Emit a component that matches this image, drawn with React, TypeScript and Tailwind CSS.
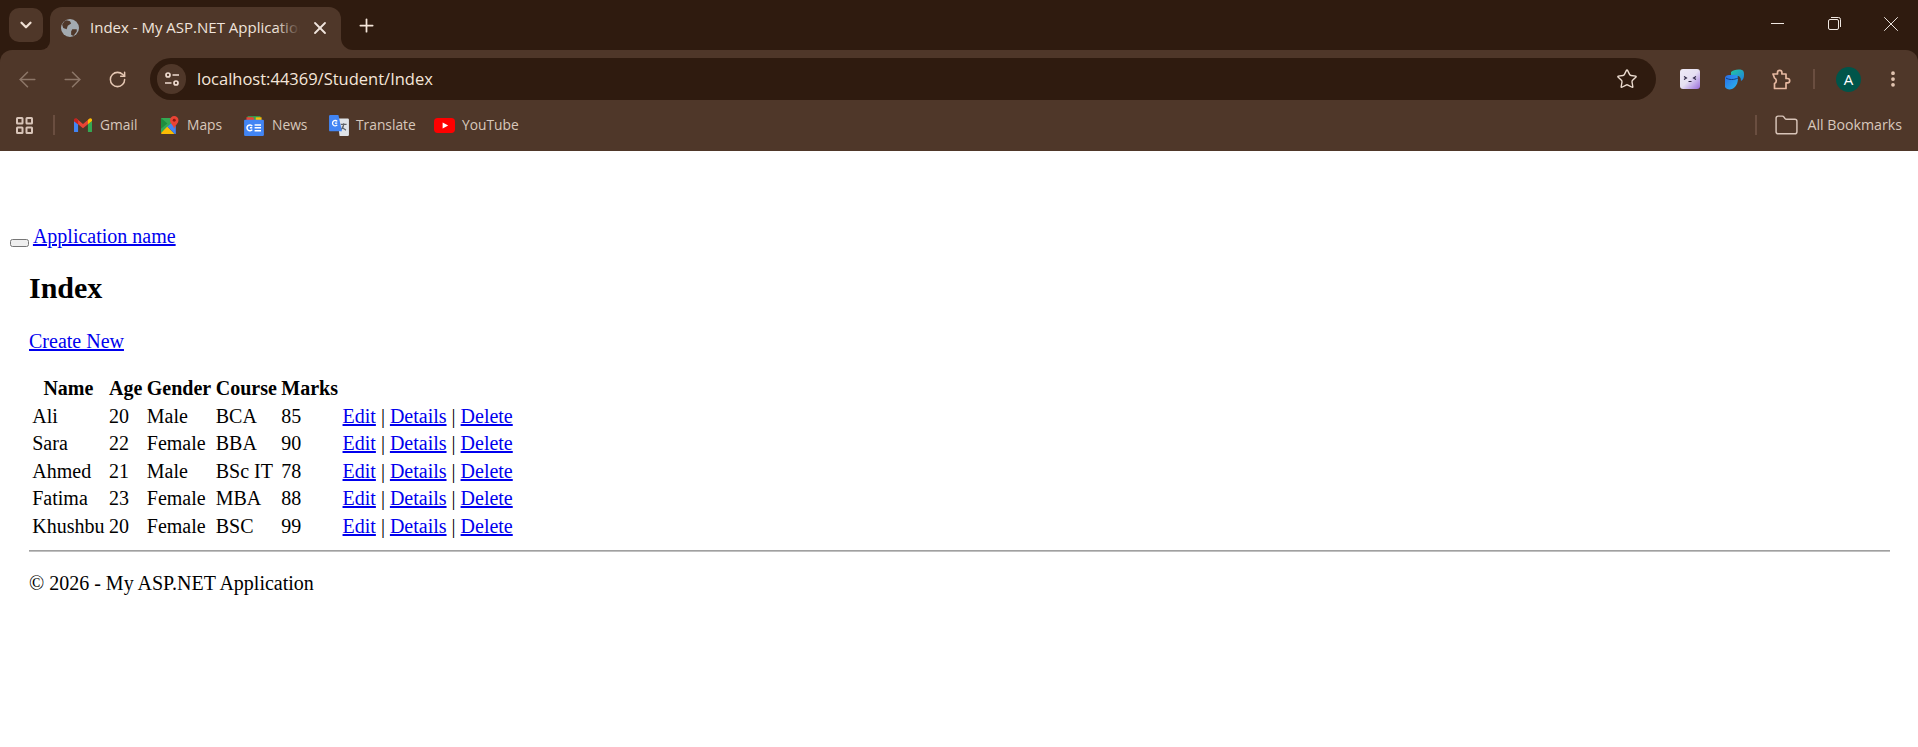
import React from "react";
import { ChevronDown, Plus, X, ArrowLeft, ArrowRight, RotateCw, Star, EllipsisVertical, Folder } from "lucide-react";

const ui = "font-['Open_Sans',sans-serif]";

function Globe() {
  return (
    <svg width="18" height="18" viewBox="0 0 16 16" className="shrink-0">
      <circle cx="8" cy="8" r="8" fill="#a3aab0" />
      <path d="M5 1l3 1 1 2-3 2-1 3-3-1-1-3 2-3zM10 9l4 0 0 2-3 4-2-1 0-3z" fill="#4f3729" />
    </svg>
  );
}

function SiteInfo() {
  return (
    <svg width="16" height="16" viewBox="0 0 16 16" fill="none" stroke="#f0dcd0" strokeWidth="1.7">
      <circle cx="4" cy="4" r="2" />
      <path d="M8.5 4H15M1 12h6.5" />
      <circle cx="12" cy="12" r="2" />
    </svg>
  );
}

function Gmail() {
  return (
    <svg width="18" height="14.400" viewBox="0 0 15 12">
      <path d="M0 2.5V11a1 1 0 0 0 1 1h2.4V5.2z" fill="#4285f4" />
      <path d="M15 2.5V11a1 1 0 0 1-1 1h-2.4V5.2z" fill="#34a853" />
      <path d="M0 2.5 L2 .5 L7.5 5 L13 .5 L11.6 5.2 L7.5 8.5 L3.4 5.2 L0 2.5z" fill="#ea4335" />
      <path d="M11.6 1.6 13 .5a1.2 1.2 0 0 1 2 1v1l-3.4 2.7z" fill="#fbbc04" />
      <path d="M0 1.5a1.2 1.2 0 0 1 2-1l1.4 1.1v3.6L0 2.5z" fill="#c5221f" />
    </svg>
  );
}

function Maps() {
  return (
    <svg width="18" height="18" viewBox="0 0 17 17">
      <path d="M0 2h10v5L5 12 0 16z" fill="#34a853" />
      <path d="M0 16 6 10l7 7H1a1 1 0 0 1-1-1z" fill="#fbbc04" />
      <path d="M6 10l5-4 3 4v7h-1z" fill="#4285f4" />
      <path d="M0 2l6 5-6 5z" fill="#1e8e3e" />
      <path d="M12.5 0a4 4 0 0 1 4 4c0 3-3 4.500-4 8-1-3.500-4-5-4-8a4 4 0 0 1 4-4z" fill="#ea4335" />
      <circle cx="12.500" cy="4" r="1.400" fill="#8b1a12" />
    </svg>
  );
}

function News() {
  return (
    <svg width="20" height="21" viewBox="0 0 17 18">
      <path d="M3 1h11v4H3z" fill="#34a853" />
      <path d="M2 2h6l1 3H2z" fill="#ea4335" />
      <path d="M10 2h5v3h-5z" fill="#fbbc04" />
      <rect x="0" y="4" width="17" height="14" rx="1" fill="#4285f4" />
      <path d="M7 9.500A2.500 2.500 0 1 0 7 12.500 M7 11H5" fill="none" stroke="#fff" strokeWidth="1.300" />
      <path d="M9 8.500h5.500M9 11h5.500M9 13.500h5.500" stroke="#fff" strokeWidth="1.300" />
    </svg>
  );
}

function Translate() {
  return (
    <svg width="20" height="21" viewBox="0 0 17 18">
      <path d="M7 3h9a1 1 0 0 1 1 1v13a1 1 0 0 1-1 1H9z" fill="#dfe3e8" />
      <path d="M10 8h5M12.500 7v1c0 2-1.500 4-3 5M11 10c1 1.500 2 2.500 3.500 3" fill="none" stroke="#5f6368" strokeWidth="1" />
      <path d="M1 0h7l3 14H1a1 1 0 0 1-1-1V1a1 1 0 0 1 1-1z" fill="#4285f4" />
      <path d="M7 5.500A2.300 2.300 0 1 0 7 8.500M7 7H5" fill="none" stroke="#fff" strokeWidth="1.100" />
    </svg>
  );
}

function YouTube() {
  return (
    <svg width="21" height="15" viewBox="0 0 17 12">
      <rect width="17" height="12" rx="3" fill="#ff0000" />
      <path d="M7 3.500 11.500 6 7 8.500z" fill="#fff" />
    </svg>
  );
}

function Ext() {
  return (
    <div className="w-[20px] h-[20px] rounded-[3px] bg-gradient-to-br from-[#eeeaf6] via-[#e6e0f2] to-[#9a6ad8] flex items-center justify-center">
      <svg width="14" height="8" viewBox="0 0 14 8" fill="none" stroke="#2a2440" strokeWidth="1.100">
        <path d="M1 1.500 3.500 3 1 4.500M13 1.500 10.500 3 13 4.500M5.500 6.500h3" />
      </svg>
    </div>
  );
}

function Copilot() {
  return (
    <svg width="20" height="21" viewBox="0 0 20 21">
      <defs>
        <linearGradient id="cpa" x1="0" y1="0" x2="1" y2="1">
          <stop offset="0" stopColor="#22c7a0" />
          <stop offset="1" stopColor="#1f7fe0" />
        </linearGradient>
        <linearGradient id="cpb" x1="0" y1="0" x2="1" y2="1">
          <stop offset="0" stopColor="#2a6be8" />
          <stop offset="1" stopColor="#2ab8ee" />
        </linearGradient>
      </defs>
      <path d="M6 3c2-2 7-3 11-2 2 .5 2 3 2 5 0 3-1 5-3 6 0-3-1-5-4-5H6z" fill="url(#cpa)" />
      <path d="M0 9c0-2 2-3 4-3h7c1 0 2 1 2 3 0 5-2 9-6 11-3 1-6 0-7-2z" fill="url(#cpb)" />
      <path d="M1 9c3 2 8 2 12 0" stroke="#123a80" strokeWidth="1" fill="none" />
    </svg>
  );
}

function PuzzleIcon() {
  return (
    <svg width="21" height="21" viewBox="0 0 21 21" fill="none" stroke="#e6b8a0" strokeWidth="1.700" strokeLinejoin="round">
      <path d="M2 5h4.500V3.500a2.200 2.200 0 0 1 4.400 0V5H15v4.500h1.500a2.200 2.200 0 0 1 0 4.400H15V19.500H3.500V14.500a3 3 0 0 0 0-5.500z" />
    </svg>
  );
}

function Apps() {
  return (
    <svg width="17" height="17" viewBox="0 0 17 17" fill="none" stroke="#d8c4b8" strokeWidth="2">
      <rect x="1" y="1" width="5.500" height="5.500" rx="0.500" />
      <rect x="10.500" y="1" width="5.500" height="5.500" rx="0.500" />
      <rect x="1" y="10.500" width="5.500" height="5.500" rx="0.500" />
      <rect x="10.500" y="10.500" width="5.500" height="5.500" rx="0.500" />
    </svg>
  );
}

function Bookmark({ icon, label, box, col }: { icon: React.ReactNode; label: string; box: string; col: string }) {
  return (
    <div className={`flex items-center ${box}`}>
      <div className={`${col} flex items-center`}>{icon}</div>
      <span className="text-[13.8px] text-[#d8c8bc]">{label}</span>
    </div>
  );
}

const rows = [
  ["Ali", "20", "Male", "BCA", "85"],
  ["Sara", "22", "Female", "BBA", "90"],
  ["Ahmed", "21", "Male", "BSc IT", "78"],
  ["Fatima", "23", "Female", "MBA", "88"],
  ["Khushbu", "20", "Female", "BSC", "99"],
];

const link = "text-[#0000ee] underline";
const th = "p-[1.25px] font-bold text-center";
const td = "p-[1.25px] text-left";

export default function App() {
  return (
    <div className="min-h-screen bg-white">
      <header className={ui}>
        <div className="h-[50px] bg-[#2f1b0f] flex">
          <button className="mt-[8px] ml-[9px] w-[34px] h-[34px] rounded-[10px] bg-[#4f3729] flex items-center justify-center text-[#f0e0d4]">
            <ChevronDown size={18} strokeWidth={3} />
          </button>
          <div className="relative mt-[7px] ml-[7px] w-[291px] h-[43px] rounded-t-[12px] bg-[#4f3729] flex items-center pl-[11px] pb-[2px]">
            <Globe />
            <div className="relative ml-[11px] w-[210px] overflow-hidden whitespace-nowrap text-[15px] text-[#f0e4dc]">
              Index - My ASP.NET Application
              <div className="absolute inset-y-0 right-0 w-[24px] bg-gradient-to-r from-transparent to-[#4f3729]" />
            </div>
            <X size={20} strokeWidth={2.2} className="ml-[10px] text-[#f0e4dc]" />
            <div className="absolute bottom-0 -left-[9px] w-[9px] h-[9px] bg-[#4f3729]">
              <div className="w-full h-full rounded-br-[9px] bg-[#2f1b0f]" />
            </div>
            <div className="absolute bottom-0 -right-[12px] w-[12px] h-[12px] bg-[#4f3729]">
              <div className="w-full h-full rounded-bl-[12px] bg-[#2f1b0f]" />
            </div>
          </div>
          <Plus size={21} strokeWidth={2} className="mt-[15px] ml-[15px] text-[#f5e6da]" />
          <div className="ml-auto flex text-[#f0e8e2]">
            <div className="w-[54px] h-[47px] flex items-center justify-center">
              <div className="w-[13px] h-[1px] bg-[#f0e8e2]" />
            </div>
            <div className="w-[60px] h-[47px] flex items-center justify-center">
              <svg width="13" height="13" viewBox="0 0 13 13" fill="none" stroke="#f0e8e2" strokeWidth="1">
                <rect x="0.500" y="2.500" width="10" height="10" rx="1.500" />
                <path d="M3 .500h7.500a2 2 0 0 1 2 2V10" />
              </svg>
            </div>
            <div className="w-[54px] h-[47px] flex items-center justify-center">
              <X size={26} strokeWidth={0.9} />
            </div>
          </div>
        </div>
        <div className="bg-[#2f1b0f]">
          <div className="bg-[#4f3729] rounded-t-[12px] h-[50px] pt-[8px] flex items-center">
            <ArrowLeft size={25} strokeWidth={1.500} className="ml-[15px] text-[#8c7668]" />
            <ArrowRight size={25} strokeWidth={1.500} className="ml-[20px] text-[#8c7668]" />
            <RotateCw size={19} strokeWidth={1.900} className="ml-[23px] text-[#e6c8b4]" />
            <div className="ml-[23px] w-[1506px] h-[42px] rounded-full bg-[#2f1b0f] flex items-center pl-[7px]">
              <div className="w-[29px] h-[30px] rounded-full bg-[#4f3729] flex items-center justify-center">
                <SiteInfo />
              </div>
              <span className="ml-[11px] text-[16.5px] text-[#f5e6da]">localhost:44369/Student/Index</span>
              <Star size={22} strokeWidth={1.500} className="ml-auto mr-[18px] text-[#ecdcd0]" />
            </div>
            <div className="flex items-center ml-[24px]">
              <Ext />
              <div className="ml-[25px]"><Copilot /></div>
              <div className="ml-[26px]"><PuzzleIcon /></div>
              <div className="ml-[21px] w-[2px] h-[20px] bg-[#6a4e40]" />
              <div className="ml-[21px] w-[25px] h-[25px] rounded-full bg-[#00554a] text-white text-[15px] flex items-center justify-center">A</div>
              <EllipsisVertical size={20} strokeWidth={2.500} className="ml-[22px] text-[#e6c8b4]" />
            </div>
          </div>
        </div>
        <div className="bg-[#4f3729] h-[51px] flex items-center pb-[1px]">
          <div className="ml-[16px] flex"><Apps /></div>
          <div className="ml-[20px] w-[2px] h-[20px] bg-[#6a4e40]" />
          <Bookmark icon={<Gmail />} label="Gmail" box="ml-[19px] w-[87px]" col="w-[26px]" />
          <Bookmark icon={<Maps />} label="Maps" box="w-[83px]" col="w-[26px]" />
          <Bookmark icon={<News />} label="News" box="w-[85px]" col="w-[28px]" />
          <Bookmark icon={<Translate />} label="Translate" box="w-[105px]" col="w-[27px]" />
          <Bookmark icon={<YouTube />} label="YouTube" box="w-[100px]" col="w-[28px]" />
          <div className="ml-auto w-[2px] h-[20px] bg-[#6a4e40]" />
          <Folder size={25} strokeWidth={1.400} className="ml-[17px] text-[#d8c4b8]" />
          <span className="ml-[8px] mr-[16px] text-[14.2px] text-[#d8c8bc]">All Bookmarks</span>
        </div>
      </header>
      <main className="px-[10px] pt-[74px] text-[20px] leading-[23px] text-black font-['Liberation_Serif',serif]">
        <div className="h-[23px]">
          <button className="inline-block w-[19px] h-[8px] bg-[#efefef] border border-[#767676] rounded-[2.5px] align-[-3px]" />
          <span> </span>
          <a className={link}>Application name</a>
        </div>
        <div className="pl-[19px] pr-[18px]">
          <h2 className="mt-[23px] text-[30px] leading-[34px] font-bold">Index</h2>
          <p className="mt-[25px]">
            <a className={link}>Create New</a>
          </p>
          <table className="mt-[21px] border-separate border-spacing-[2.5px]">
            <thead>
              <tr>
                <th className={th}>Name</th>
                <th className={th}>Age</th>
                <th className={th}>Gender</th>
                <th className={th}>Course</th>
                <th className={th}>Marks</th>
                <th className={th}></th>
              </tr>
            </thead>
            <tbody>
              {rows.map((r) => (
                <tr key={r[0]}>
                  {r.map((c, i) => (
                    <td key={i} className={td}>{c}</td>
                  ))}
                  <td className={td}>
                    <a className={link}>Edit</a> | <a className={link}>Details</a> | <a className={link}>Delete</a>
                  </td>
                </tr>
              ))}
            </tbody>
          </table>
          <hr className="mt-[9px] border-t border-b border-[#a0a0a0] border-b-[#c0c0c0] h-[2px]" />
          <footer className="mt-[20px]">
            <p>© 2026 - My ASP.NET Application</p>
          </footer>
        </div>
      </main>
    </div>
  );
}
